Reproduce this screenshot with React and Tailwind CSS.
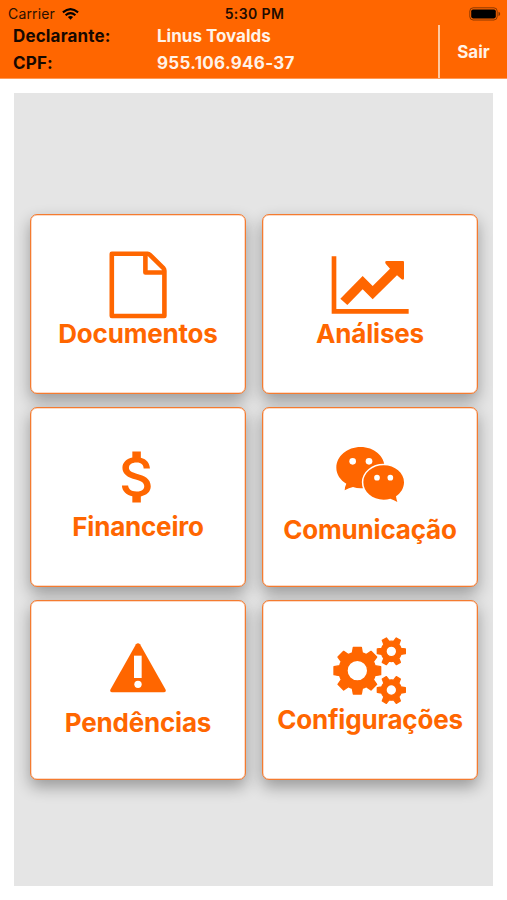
import React from 'react';
import { MdAttachMoney } from 'react-icons/md';

// Builds the outline of a cog wheel with tapered teeth and a round hole
const gearPath = ({ cx, cy, outer, inner, hole, teeth, top, base }) => {
    const step = (Math.PI * 2) / teeth;
    const point = (angle, along, across) => {
        const x = cx + Math.cos(angle) * along - Math.sin(angle) * across;
        const y = cy + Math.sin(angle) * along + Math.cos(angle) * across;
        return `${x.toFixed(1)} ${y.toFixed(1)}`;
    };
    let d = '';
    for (let i = 0; i < teeth; i++) {
        const a = i * step;
        d += i === 0 ? `M${point(a, inner, -base)}` : `A${inner} ${inner} 0 0 1 ${point(a, inner, -base)}`;
        d += `L${point(a, outer, -top)}L${point(a, outer, top)}L${point(a, inner, base)}`;
    }
    d += `A${inner} ${inner} 0 0 1 ${point(0, inner, -base)}Z`;
    d += `M${cx + hole} ${cy}a${hole} ${hole} 0 1 0 ${-hole * 2} 0a${hole} ${hole} 0 1 0 ${hole * 2} 0Z`;
    return d;
};

const bigGear = gearPath({ cx: 314, cy: 227, outer: 70, inner: 53, hole: 31, teeth: 8, top: 12, base: 15 });
const topGear = gearPath({ cx: 416, cy: 169, outer: 42, inner: 29, hole: 16, teeth: 6, top: 7, base: 9 });
const bottomGear = gearPath({ cx: 416, cy: 285, outer: 42, inner: 29, hole: 16, teeth: 6, top: 7, base: 9 });

const FileIcon = ({ className }) => (
    <svg viewBox="0 0 58 68" className={className} fill="none" stroke="currentColor" strokeWidth="4.6" strokeLinejoin="round">
        <path d="M4 2.8H38.6Q39.9 2.8 40.9 3.8L54.4 17.2Q55.4 18.2 55.4 19.8V65H2.8V2.8Z" />
        <path d="M36.4 2.8V21.5H55.4" />
    </svg>
);

const ChartIcon = ({ className }) => (
    <svg viewBox="233 167 234 174" className={className} fill="currentColor">
        <path d="M235 168h14v158h217v14H235z" />
        <path d="M261 295L328 227L358 257L410 205L397 190Q393 182 400 182H449Q452 182 452 185V234Q452 240 445 237L431 225L358 297L328 267L282 314Z" />
    </svg>
);

const ChatIcon = ({ className }) => (
    <svg viewBox="249 138 207 171" className={className} fill="currentColor">
        <path d="M323 141C363 141 395 168 395 203C395 238 363 265 323 265Q311 265 300 261Q288 264 275 271Q275 261 280 251C262 240 250 223 250 203C250 168 283 141 323 141Z" />
        <path
            d="M392 196C426 196 453 219 453 247C453 264 444 279 429 289Q430 297 433 306Q423 300 412 296Q402 299 392 299C358 299 331 276 331 247C331 219 358 196 392 196Z"
            stroke="white"
            strokeWidth="9"
            paintOrder="stroke"
        />
        <g fill="white">
            <circle cx="299" cy="184" r="10" />
            <circle cx="348" cy="184" r="10" />
            <circle cx="372" cy="233" r="8.5" />
            <circle cx="412" cy="233" r="8.5" />
        </g>
    </svg>
);

const WarningIcon = ({ className }) => (
    <svg viewBox="300 143 168 150" className={className} fill="currentColor">
        <path d="M378 147Q384 140 390 147L467 283Q469 291 461 291H307Q299 291 301 283Z" />
        <path d="M372 181h23v67h-23z" fill="white" />
        <circle cx="384" cy="267" r="11" fill="white" />
    </svg>
);

const GearsIcon = ({ className }) => (
    <svg viewBox="241 126 219 201" className={className} fill="currentColor" stroke="currentColor" strokeWidth="4" strokeLinejoin="round" fillRule="evenodd">
        <path d={bigGear} />
        <path d={topGear} />
        <path d={bottomGear} />
    </svg>
);

const WifiIcon = () => (
    <svg viewBox="0 0 17 12" className="w-[17px] h-[12px]" fill="none" stroke="black" strokeWidth="2.1">
        <path d="M0.9 4.4Q8.5 -2.2 16.1 4.4" />
        <path d="M3.6 7.2Q8.5 3 13.4 7.2" />
        <path d="M8.5 11.7L5.9 9.1Q8.5 7 11.1 9.1Z" fill="black" stroke="none" />
    </svg>
);

const BatteryIcon = () => (
    <svg viewBox="0 0 32 14" className="w-8 h-[14px]">
        <rect x="0.8" y="0.8" width="27.4" height="12.2" rx="3.4" fill="none" stroke="black" strokeOpacity="0.45" />
        <rect x="2.2" y="2.4" width="24.6" height="9" rx="1.8" fill="black" />
        <path d="M29.5 4.8Q31.2 5.4 31.2 7T29.5 9.2Z" fill="black" fillOpacity="0.5" />
    </svg>
);

const menuItems = [
    { label: 'Documentos', Icon: FileIcon, iconClass: 'w-[58px] h-[68px] mt-[36px] -mb-px' },
    { label: 'Análises', Icon: ChartIcon, iconClass: 'w-[78px] h-[58px] mt-[41px] mb-1 mr-px' },
    { label: 'Financeiro', Icon: MdAttachMoney, iconClass: 'w-[68px] h-[68px] mt-[35px]' },
    { label: 'Comunicação', Icon: ChatIcon, iconClass: 'w-[69px] h-[57px] mt-[38px] mb-[11px]' },
    { label: 'Pendências', Icon: WarningIcon, iconClass: 'w-[56px] h-[50px] mt-[42px] mb-[14px]' },
    { label: 'Configurações', Icon: GearsIcon, iconClass: 'w-[73px] h-[67px] mt-[36px] mr-px' },
];

const MenuCard = ({ label, Icon, iconClass }) => (
    <button className="flex flex-col items-center bg-white border border-[#f47b30] rounded-[7px] shadow-[inset_0_0_0_0.5px_#f9b58c,0_7px_16px_rgba(0,0,0,0.33)] text-[#ff6600]">
        <Icon className={`shrink-0 ${iconClass}`} />
        <span className="text-[26px] leading-8 font-bold tracking-[-0.2px] whitespace-nowrap">{label}</span>
    </button>
);

const App = () => {
    return (
        <div className="w-[507px] h-[900px] bg-white overflow-hidden flex flex-col font-['Inter',sans-serif]">
            <header className="h-[79px] shrink-0 bg-[#ff6600] border-b border-[#ff9a57] flex flex-col">
                <div className="h-[25px] shrink-0 grid grid-cols-3 items-center pl-2 pr-[6px] pt-[2px] text-[14px] leading-none">
                    <div className="flex items-center gap-[7px]">
                        <span className="text-[#2b1100] tracking-[0.15px]">Carrier</span>
                        <WifiIcon />
                    </div>
                    <span className="text-center font-semibold text-[14px] tracking-[0.4px] text-[#1e0c00]">5:30 PM</span>
                    <div className="flex justify-end">
                        <BatteryIcon />
                    </div>
                </div>
                <div className="flex-1 flex font-bold text-[17px]">
                    <div className="flex-1 grid grid-cols-[144px_1fr] auto-rows-[27px] pl-[13px] -mt-[2px] leading-[27px]">
                        <span className="text-[#160800] tracking-[0.15px]">Declarante:</span>
                        <span className="text-[#fff3e8]">Linus Tovalds</span>
                        <span className="text-[#160800] tracking-[0.15px]">CPF:</span>
                        <span className="text-[#fff3e8] tracking-[0.3px]">955.106.946-37</span>
                    </div>
                    <button className="w-[69px] pt-[2px] border-l-2 border-[#ffc8a0] text-[#fff3e8]">Sair</button>
                </div>
            </header>

            <main className="mx-[14px] mt-[14px] h-[793px] shrink-0 bg-[#e5e5e5] overflow-hidden pl-4 pr-[15px] pt-[121px]">
                <div className="grid grid-cols-2 auto-rows-[180px] gap-x-4 gap-y-[13px] h-[566px]">
                    {menuItems.map((item) => (
                        <MenuCard key={item.label} {...item} />
                    ))}
                </div>
            </main>
        </div>
    );
};

export default App;
